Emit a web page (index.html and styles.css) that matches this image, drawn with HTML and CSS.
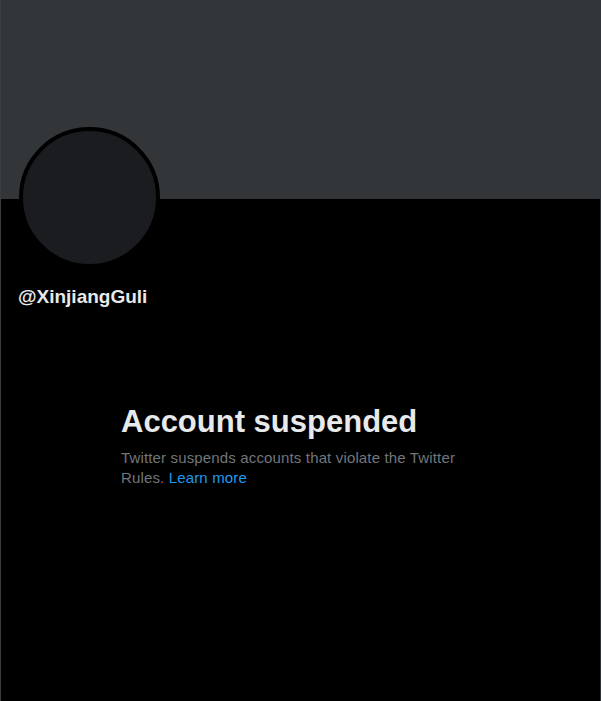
FILE: index.html
```html
<!DOCTYPE html>
<html lang="en">
<head>
<meta charset="utf-8">
<title>@XinjiangGuli</title>
<link rel="stylesheet" href="styles.css">
</head>
<body>
<div class="page">
  <div class="banner"></div>
  <div class="main">
    <div class="avatar-row">
      <div class="avatar"></div>
    </div>
    <div class="handle">@XinjiangGuli</div>
    <div class="notice">
      <h1 class="title">Account suspended</h1>
      <p class="desc">Twitter suspends accounts that violate the Twitter Rules. <a class="link" href="#">Learn more</a></p>
    </div>
  </div>
</div>
</body>
</html>
```
FILE: styles.css
```css
html, body {
  margin: 0;
  padding: 0;
  background: #000;
}
body {
  font-family: "Liberation Sans", Arial, sans-serif;
  color: #e7e9ea;
}
.page {
  width: 600px;
  height: 701px;
  border-left: 1px solid #3a3d40;
  display: flex;
  flex-direction: column;
}
.banner {
  height: 199px;
  background: #333639;
  flex: none;
}
.main {
  flex: 1;
  border-right: 1px solid #2f3336;
  display: flex;
  flex-direction: column;
}
.avatar-row {
  height: 68px;
  padding-left: 18px;
}
.avatar {
  width: 133px;
  height: 133px;
  border: 4px solid #000;
  border-radius: 50%;
  background: #1b1c1f;
  margin-top: -72px;
}
.handle {
  margin: 18px 0 0 17px;
  font-size: 19px;
  line-height: 24px;
  font-weight: 700;
  color: #e7e9ea;
}
.notice {
  margin: 95px 0 0 120px;
  width: 345px;
}
.title {
  margin: 0;
  font-size: 31px;
  line-height: 36px;
  font-weight: 700;
  color: #e7e9ea;
}
.desc {
  margin: 8px 0 0;
  font-size: 15px;
  line-height: 20px;
  letter-spacing: 0.15px;
  color: #71767b;
}
.link {
  color: #1d9bf0;
  text-decoration: none;
}
```
